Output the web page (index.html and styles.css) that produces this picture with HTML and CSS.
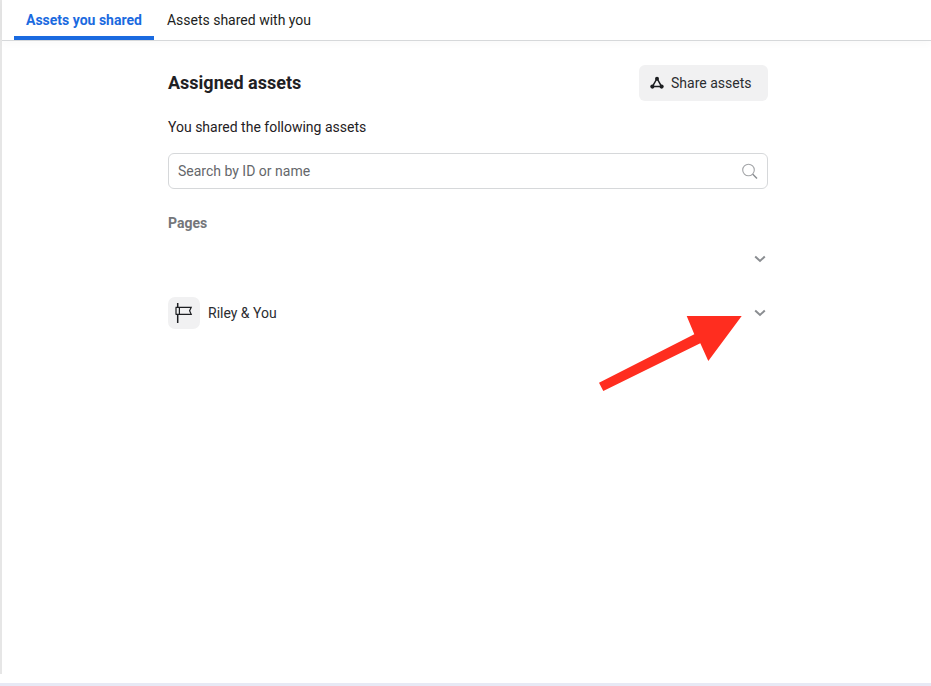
FILE: index.html
```html
<!DOCTYPE html>
<html lang="en">
<head>
<meta charset="utf-8">
<title>Assigned assets</title>
<link rel="stylesheet" href="styles.css">
</head>
<body>
<div class="frame">
  <nav class="tabs">
    <a class="tab tab-active">Assets you shared</a>
    <a class="tab">Assets shared with you</a>
  </nav>
  <main class="content">
    <header class="head">
      <h1 class="title">Assigned assets</h1>
      <button class="share-btn" type="button">
        <svg class="share-icon" viewBox="0 0 14 14" width="14" height="14" aria-hidden="true">
          <path d="M7 2.5 L2.4 10.6 H11.6 Z" fill="none" stroke="#1c1e21" stroke-width="1.5"/>
          <circle cx="7" cy="2.7" r="2" fill="#1c1e21"/>
          <circle cx="2.4" cy="10.6" r="2.1" fill="#1c1e21"/>
          <circle cx="11.6" cy="10.6" r="2.1" fill="#1c1e21"/>
        </svg>
        <span>Share assets</span>
      </button>
    </header>
    <p class="lead">You shared the following assets</p>
    <div class="search">
      <span class="search-text">Search by ID or name</span>
      <svg class="search-icon" viewBox="0 0 18 18" width="18" height="18" aria-hidden="true">
        <circle cx="8.5" cy="8" r="5.8" fill="none" stroke="#a3a5a8" stroke-width="1.1"/>
        <path d="M12.8 12.3 L17 16.5" stroke="#8a8d91" stroke-width="1.4" fill="none"/>
      </svg>
    </div>
    <h2 class="section">Pages</h2>
    <div class="row row-empty">
      <svg class="chev" viewBox="0 0 12 8" width="12" height="8" aria-hidden="true"><path d="M1.2 1.5 L6 6 L10.8 1.5" fill="none" stroke="#8a8d91" stroke-width="2"/></svg>
    </div>
    <div class="row row-page">
      <div class="page-left">
        <span class="page-icon">
          <svg viewBox="0 0 18 20" width="18" height="20" aria-hidden="true">
            <path d="M2.7 0 V4.3 M2.7 11.3 V20" stroke="#1c1e21" stroke-width="1.5" fill="none"/>
            <path d="M0.6 4.3 H16.2 L14.6 7.8 L16.2 11.3 H0.6 M1 4.3 V11.3 M4.4 4.3 V11.3" stroke="#1c1e21" stroke-width="1.2" fill="none"/>
          </svg>
        </span>
        <span class="page-name">Riley &amp; You</span>
      </div>
      <svg class="chev" viewBox="0 0 12 8" width="12" height="8" aria-hidden="true"><path d="M1.2 1.5 L6 6 L10.8 1.5" fill="none" stroke="#8a8d91" stroke-width="2"/></svg>
    </div>
  </main>
</div>
<div class="bottom-strip"></div>
<svg class="arrow" viewBox="0 0 931 686" width="931" height="686" aria-hidden="true">
  <polygon fill="#ff2d1f" points="686.7,316 741.7,316 708.3,361 700.3,343.3 603.3,391 599,382.7 694.3,334.3"/>
</svg>
</body>
</html>
```
FILE: styles.css
```css
* { box-sizing: border-box; }
html, body { margin: 0; padding: 0; height: 100%; overflow: hidden; }
body {
  background: #fff;
  font-family: Roboto, "Liberation Sans", sans-serif;
  color: #1c1e21;
  position: relative;
}
.frame {
  height: 674px;
  border-left: 2px solid #e6e6e6;
}
.tabs {
  display: flex;
  gap: 1px;
  height: 41px;
  padding-left: 12px;
  border-bottom: 1px solid #d6d8da;
  box-shadow: 0 1px 10px rgba(0, 0, 0, 0.035);
}
.tab {
  display: flex;
  align-items: flex-start;
  padding: 12px 12px 0;
  height: 40px;
  font-size: 14px;
  line-height: 17px;
  color: #1c1e21;
}
.tab-active {
  color: #1a6ae0;
  font-weight: 700;
  border-bottom: 4px solid #1a6ae0;
}
.content {
  width: 600px;
  margin-left: 166px;
  padding-top: 24px;
}
.head {
  display: flex;
  justify-content: space-between;
  align-items: center;
  height: 36px;
}
.title {
  margin: 0;
  font-size: 18px;
  font-weight: 700;
  line-height: 22px;
  color: #1f2124;
}
.share-btn {
  display: flex;
  align-items: center;
  gap: 7px;
  width: 129px;
  height: 36px;
  padding: 0 0 0 11px;
  border: 0;
  border-radius: 6px;
  background: #f1f1f2;
  font: 14px/17px Roboto, "Liberation Sans", sans-serif;
  color: #2b2d30;
}
.lead {
  margin: 18px 0 0;
  font-size: 14px;
  line-height: 17px;
  color: #1f2124;
}
.search {
  display: flex;
  justify-content: space-between;
  align-items: center;
  height: 36px;
  margin-top: 17px;
  padding: 0 9px;
  border: 1px solid #d6d8da;
  border-radius: 6px;
}
.search-text { font-size: 14px; line-height: 17px; color: #65676b; }
.section {
  margin: 26px 0 0;
  font-size: 14px;
  font-weight: 700;
  line-height: 17px;
  color: #74767a;
}
.row {
  display: flex;
  align-items: center;
  justify-content: flex-end;
  padding-right: 2px;
}
.row-empty { height: 54px; padding-bottom: 1px; }
.row-page { height: 54px; justify-content: space-between; }
.chev { display: block; }
.page-left { display: flex; align-items: center; gap: 8px; }
.page-icon {
  display: flex;
  align-items: center;
  justify-content: center;
  width: 32px;
  height: 32px;
  border-radius: 7px;
  background: #f1f1f2;
}
.page-name { font-size: 14px; line-height: 17px; color: #2b2d30; }
.bottom-strip {
  height: 3px;
  margin-top: 9px;
  background: #e7e9f5;
}
.arrow {
  position: absolute;
  left: 0;
  top: 0;
  pointer-events: none;
}
```
